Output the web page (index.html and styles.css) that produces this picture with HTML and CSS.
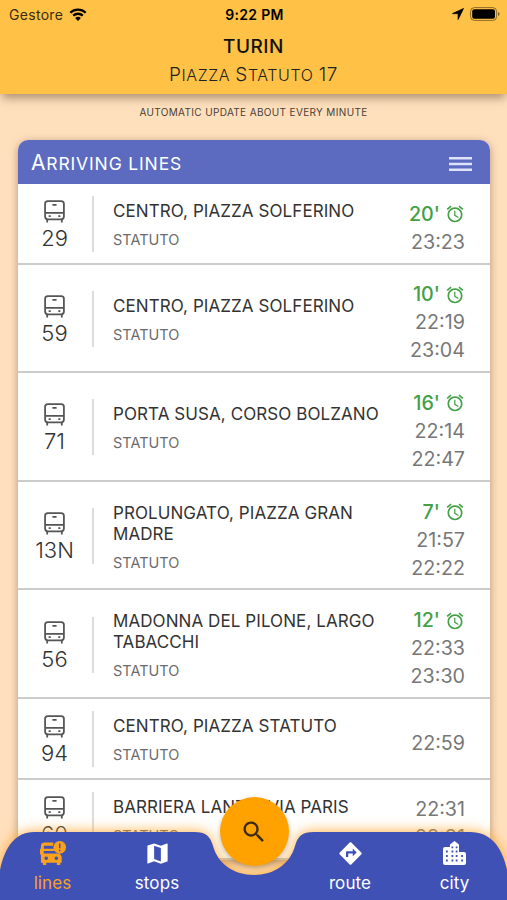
FILE: index.html
```html
<!DOCTYPE html>
<html lang="en">
<head>
    <meta charset="UTF-8">
    <meta name="viewport" content="width=device-width, initial-scale=1.0">
    <title>Turin - Piazza Statuto 17</title>
    <link rel="stylesheet" href="styles.css">
</head>
<body>

<svg class="defs" width="0" height="0">
    <symbol id="bus" viewBox="0 0 20 22">
        <rect x="1" y="1" width="18" height="17.5" rx="2.6" fill="none" stroke="currentColor" stroke-width="1.7"/>
        <path d="M1 12.3h18M8 4.6h4M3 18.5v3M17 18.5v3" fill="none" stroke="currentColor" stroke-width="1.7"/>
        <path d="M4.4 14.700h2v1.6h-2zM13.6 14.700h2v1.6h-2z" fill="currentColor"/>
    </symbol>
    <symbol id="alarm" viewBox="0 0 24 24">
        <path fill="currentColor" d="M22 5.72l-4.6-3.86-1.29 1.53 4.6 3.86L22 5.72zM7.88 3.39L6.6 1.86 2 5.71l1.29 1.53 4.59-3.85zM12.5 8H11v6l4.75 2.85.75-1.23-4-2.37V8zM12 4c-4.97 0-9 4.03-9 9s4.02 9 9 9c4.97 0 9-4.03 9-9s-4.03-9-9-9zm0 16c-3.87 0-7-3.13-7-7s3.13-7 7-7 7 3.13 7 7-3.13 7-7 7z"/>
    </symbol>
</svg>

<header>
    <div class="status">
        <div class="carrier">
            Gestore
            <svg class="wifi" viewBox="0 0 18 13">
                <path d="M1.3 4.8a11 11 0 0 1 15.4 0M4.2 7.7a6.9 6.9 0 0 1 9.6 0" fill="none" stroke="#000" stroke-width="2.3"/>
                <path d="M9 13l-2.9-2.9a4.1 4.1 0 0 1 5.8 0z"/>
            </svg>
        </div>
        <div class="clock">9:22 PM</div>
        <div class="indicators">
            <svg class="arrow" viewBox="0 0 12 12"><path d="M11.5.5L.5 5.6h5.6v5.9z" stroke="#000" stroke-width=".8" stroke-linejoin="round"/></svg>
            <svg class="battery" viewBox="0 0 30 14">
                <rect x=".6" y=".6" width="26" height="12.8" rx="3.8" fill="none" stroke="#000" stroke-opacity=".45"/>
                <rect x="2.2" y="2.3" width="22.8" height="9.4" rx="2"/>
                <path d="M28 5v4q1.6-.6 1.6-2T28 5z" fill-opacity=".5"/>
            </svg>
        </div>
    </div>
    <h1>TURIN</h1>
    <h2><span>P</span>IAZZA <span>S</span>TATUTO <span>17</span></h2>
</header>

<p class="note">AUTOMATIC UPDATE ABOUT EVERY MINUTE</p>

<main class="card">
    <div class="card-header">
        <h3><span>A</span>RRIVING LINES</h3>
        <svg class="menu" viewBox="0 0 23 14"><path d="M0 1.300h23M0 7h23M0 12.700h23" stroke="#e0e4fa" stroke-width="2.500"/></svg>
    </div>

    <div class="row">
        <div class="line"><svg><use href="#bus"/></svg>29</div>
        <div class="info"><div class="dest">CENTRO, PIAZZA SOLFERINO</div><div class="stop">STATUTO</div></div>
        <div class="times"><div class="live">20' <svg><use href="#alarm"/></svg></div><div>23:23</div></div>
    </div>
    <div class="row">
        <div class="line"><svg><use href="#bus"/></svg>59</div>
        <div class="info"><div class="dest">CENTRO, PIAZZA SOLFERINO</div><div class="stop">STATUTO</div></div>
        <div class="times"><div class="live">10' <svg><use href="#alarm"/></svg></div><div>22:19</div><div>23:04</div></div>
    </div>
    <div class="row">
        <div class="line"><svg><use href="#bus"/></svg>71</div>
        <div class="info"><div class="dest">PORTA SUSA, CORSO BOLZANO</div><div class="stop">STATUTO</div></div>
        <div class="times"><div class="live">16' <svg><use href="#alarm"/></svg></div><div>22:14</div><div>22:47</div></div>
    </div>
    <div class="row">
        <div class="line"><svg><use href="#bus"/></svg>13N</div>
        <div class="info"><div class="dest">PROLUNGATO, PIAZZA GRAN MADRE</div><div class="stop">STATUTO</div></div>
        <div class="times"><div class="live">7' <svg><use href="#alarm"/></svg></div><div>21:57</div><div>22:22</div></div>
    </div>
    <div class="row">
        <div class="line"><svg><use href="#bus"/></svg>56</div>
        <div class="info"><div class="dest">MADONNA DEL PILONE, LARGO TABACCHI</div><div class="stop">STATUTO</div></div>
        <div class="times"><div class="live">12' <svg><use href="#alarm"/></svg></div><div>22:33</div><div>23:30</div></div>
    </div>
    <div class="row">
        <div class="line"><svg><use href="#bus"/></svg>94</div>
        <div class="info"><div class="dest">CENTRO, PIAZZA STATUTO</div><div class="stop">STATUTO</div></div>
        <div class="times"><div>22:59</div></div>
    </div>
    <div class="row">
        <div class="line"><svg><use href="#bus"/></svg>60</div>
        <div class="info"><div class="dest">BARRIERA LANZO, VIA PARIS</div><div class="stop">STATUTO</div></div>
        <div class="times"><div>22:31</div><div>23:31</div></div>
    </div>
</main>

<nav>
    <svg class="nav-shape" viewBox="0 0 507 68">
        <path d="M0 68V38C5 14 16 0 34 0H194C206 0 210 4 213 14C218 32 234 43 254 43S290 32 295 14C298 4 302 0 314 0H470C490 0 502 14 507 38V68z" fill="#3f51b5"/>
    </svg>
    <a class="active" href="#">
        <svg viewBox="0 0 28 26">
            <path d="M15 1.500H6Q2 1.500 2 5V8H1V14H2V22.500H4V25H7.500V22.500H18.500V25H22V22.500H23.500V16L21.500 13H5V10.500H16V8H5V5H14.500zM7.500 16a1.900 1.900 0 1 1 0 3.800 1.900 1.900 0 0 1 0-3.800zM18 16a1.900 1.900 0 1 1 0 3.800 1.900 1.900 0 0 1 0-3.800z" fill-rule="evenodd" fill="currentColor"/>
            <circle cx="21.500" cy="6.500" r="6.500" fill="currentColor"/>
            <path d="M21.500 2.600v5M21.500 9v1.700" stroke="#3f51b5" stroke-width="1.500"/>
        </svg>
        lines
    </a>
    <a href="#">
        <svg viewBox="0 0 24 24"><path fill="currentColor" d="M20.500 3l-.16.03L15 5.100 9 3 3.360 4.900c-.21.07-.36.25-.36.48V20.500c0 .28.22.5.5.5l.16-.03L9 18.900l6 2.100 5.640-1.900c.21-.07.36-.25.36-.48V3.500c0-.28-.22-.5-.5-.5zM15 19l-6-2.110V5l6 2.110V19z"/></svg>
        stops
    </a>
    <a href="#">
        <svg viewBox="0 0 24 24"><path fill="currentColor" d="M21.710 11.290l-9-9c-.39-.39-1.020-.39-1.410 0l-9 9c-.39.39-.39 1.020 0 1.410l9 9c.39.39 1.020.39 1.410 0l9-9c.39-.38.39-1.010 0-1.410zM14 14.500V12h-4v3H8v-4c0-.55.45-1 1-1h5V7.500l3.500 3.500-3.500 3.500z"/></svg>
        route
    </a>
    <a href="#">
        <svg viewBox="0 0 27 27">
            <path d="M2 9q0-2 2-2h5V4.500L13.500 1 18 4.500V12h5q2 0 2 2v9q0 2-2 2H4q-2 0-2-2z" fill="currentColor"/>
            <path d="M10.500 7.300h1.800M14.700 7.300h1.800M5 11.500h1.800M10.500 11.500h1.800M14.700 11.500h1.800M5 16h1.800M10.500 16h1.800M14.700 16h1.800M20.200 16h1.800M5 20.500h1.800M10.500 20.500h1.800M14.700 20.500h1.800M20.200 20.500h1.800" stroke="#3f51b5" stroke-width="1.800"/>
        </svg>
        city
    </a>
    <button class="search" aria-label="Search">
        <svg viewBox="0 0 24 24"><path d="M15.500 14h-.79l-.28-.27C15.410 12.590 16 11.110 16 9.500 16 5.910 13.090 3 9.500 3S3 5.910 3 9.500 5.910 16 9.500 16c1.610 0 3.090-.59 4.230-1.570l.27.28v.79l5 4.990L20.490 19l-4.990-5zm-6 0C7.010 14 5 11.990 5 9.500S7.010 5 9.500 5 14 7.010 14 9.500 11.990 14 9.500 14z"/></svg>
    </button>
</nav>

</body>
</html>
```
FILE: styles.css
```css
* {
    box-sizing: border-box;
}

body {
    margin: 0;
    height: 900px;
    overflow: hidden;
    position: relative;
    font-family: Inter, sans-serif;
    background-color: #ffe0bd;
    color: #333;
}

.defs {
    position: absolute;
}

h1, h2, h3, p {
    margin: 0;
}

header {
    height: 94px;
    background-color: #ffc246;
    text-align: center;
    box-shadow: 0 6px 9px -2px rgba(90, 60, 40, 0.5);
}

.status {
    display: grid;
    grid-template-columns: 1fr auto 1fr;
    align-items: center;
    height: 28px;
    padding: 0 7px 0 9px;
    font-size: 14px;
    color: #000;
}

.carrier {
    display: flex;
    align-items: center;
    gap: 6px;
    color: #3a2c10;
    letter-spacing: 0.3px;
}

.wifi {
    width: 18px;
    height: 13px;
}

.clock {
    font-weight: 600;
    letter-spacing: 0.3px;
}

.indicators {
    display: flex;
    justify-content: flex-end;
    align-items: center;
    gap: 6px;
}

.arrow {
    width: 12px;
    height: 12px;
}

.battery {
    width: 30px;
    height: 14px;
}

h1 {
    font-size: 19px;
    line-height: 26px;
    margin-top: 6px;
    font-weight: 500;
    color: #111;
    letter-spacing: 0.5px;
}

h2 {
    font-size: 16px;
    line-height: 30px;
    font-weight: 300;
    color: #222;
    letter-spacing: 0.6px;
}

h2 span {
    font-size: 19px;
}

.note {
    margin-top: 9px;
    text-align: center;
    font-size: 10px;
    line-height: 18px;
    letter-spacing: 0.35px;
    color: #4a4038;
}

.card {
    margin: 19px 17px 0 18px;
    border-radius: 10px 10px 0 0;
    background-color: #fff;
    box-shadow: 0 2px 9px rgba(110, 70, 50, 0.5);
}

.card-header {
    display: flex;
    justify-content: space-between;
    align-items: center;
    height: 44px;
    padding: 3px 18px 0 13px;
    border-radius: 10px 10px 0 0;
    background-color: #5c6bc0;
    color: #fff;
}

h3 {
    font-size: 17.5px;
    line-height: 26px;
    font-weight: 400;
    letter-spacing: 0.85px;
}

h3 span {
    font-size: 21px;
}

.menu {
    width: 23px;
    height: 14px;
}

.row {
    display: flex;
    align-items: center;
    border-bottom: 2px solid #ccc;
    padding: 1px 25px 0 0;
    height: 80.6px;
}

.row:has(.times div:nth-child(3)) {
    height: 108.6px;
}

.line {
    display: flex;
    flex-direction: column;
    align-items: center;
    justify-content: space-between;
    width: 76px;
    height: 56px;
    margin-top: 1px;
    padding: 4px 1px 0 0;
    border-right: 2px solid #ddd;
    font-size: 22px;
    line-height: 27px;
    font-weight: 300;
}

.line svg {
    width: 21px;
    height: 23px;
    color: #555;
}

.info {
    flex: 1;
    padding: 4px 0 0 19px;
}

.dest {
    width: 272px;
    font-size: 17px;
    line-height: 21px;
    letter-spacing: 0.08px;
}

.stop {
    margin-top: 8px;
    font-size: 14.5px;
    line-height: 20px;
    color: #6c6c6c;
}

.times {
    padding-top: 8px;
    text-align: right;
    font-size: 19.7px;
    line-height: 28px;
    color: #777;
}

.live {
    display: flex;
    justify-content: flex-end;
    align-items: center;
    gap: 5px;
    height: 28px;
    font-weight: 500;
    color: #43a047;
}

.live svg {
    width: 20px;
    height: 20px;
    margin-top: 1px;
}

nav {
    position: absolute;
    left: 0;
    right: 0;
    bottom: 0;
    height: 68px;
    display: grid;
    grid-template-columns: 105px 104px 89px 104px 105px;
    font-size: 17px;
}

.nav-shape {
    position: absolute;
    inset: 0;
    overflow: visible;
    filter: drop-shadow(0 0 7px rgba(255, 160, 30, 0.9));
}

nav a {
    position: relative;
    display: flex;
    flex-direction: column;
    align-items: center;
    padding-top: 8px;
    line-height: 32px;
    color: #fff;
    text-decoration: none;
    letter-spacing: 0.1px;
}

nav a:nth-of-type(3) {
    grid-column: 4;
}

nav a svg {
    width: 27px;
    height: 27px;
}

nav .active {
    color: #f9a11b;
}

.search {
    position: absolute;
    left: 219.5px;
    top: -35px;
    width: 69px;
    height: 69px;
    display: flex;
    align-items: center;
    justify-content: center;
    padding: 0;
    border: none;
    border-radius: 50%;
    background-color: #ffa200;
    box-shadow: 0 2px 5px rgba(120, 90, 40, 0.4);
}

.search svg {
    width: 28px;
    height: 28px;
    fill: #3b2c0c;
}
```
